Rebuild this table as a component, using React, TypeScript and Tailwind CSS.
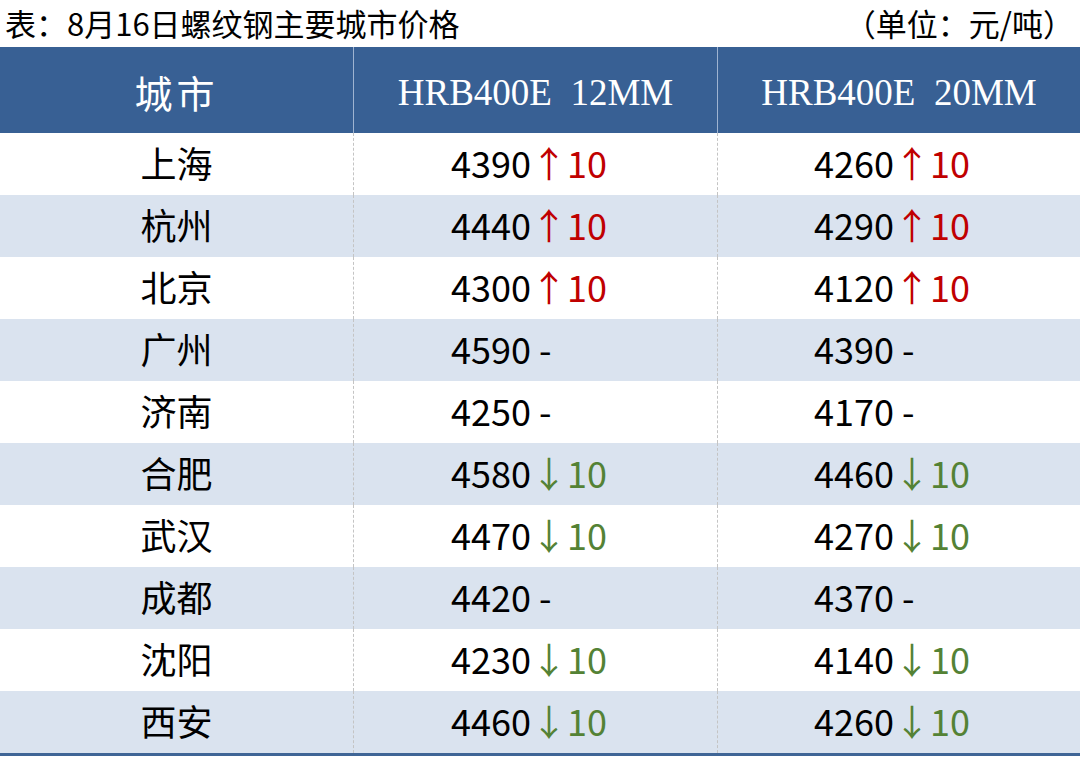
import React from 'react'

type Change = { dir: 'up' | 'down' | 'flat'; amount?: number }

interface Row {
  city: string
  p12: number
  c12: Change
  p20: number
  c20: Change
}

const up: Change = { dir: 'up', amount: 10 }
const down: Change = { dir: 'down', amount: 10 }
const flat: Change = { dir: 'flat' }

const rows: Row[] = [
  { city: '上海', p12: 4390, c12: up, p20: 4260, c20: up },
  { city: '杭州', p12: 4440, c12: up, p20: 4290, c20: up },
  { city: '北京', p12: 4300, c12: up, p20: 4120, c20: up },
  { city: '广州', p12: 4590, c12: flat, p20: 4390, c20: flat },
  { city: '济南', p12: 4250, c12: flat, p20: 4170, c20: flat },
  { city: '合肥', p12: 4580, c12: down, p20: 4460, c20: down },
  { city: '武汉', p12: 4470, c12: down, p20: 4270, c20: down },
  { city: '成都', p12: 4420, c12: flat, p20: 4370, c20: flat },
  { city: '沈阳', p12: 4230, c12: down, p20: 4140, c20: down },
  { city: '西安', p12: 4460, c12: down, p20: 4260, c20: down },
]

const sans = { fontFamily: '"Noto Sans CJK SC", "Noto Sans", sans-serif' }
const serif = { fontFamily: '"Liberation Serif", "Noto Sans CJK SC", serif' }

function Price({ value, change }: { value: number; change: Change }) {
  return (
    <span className="whitespace-pre">
      <span className="text-black">{value}</span>
      {change.dir === 'up' && <span className="text-[#c00000]">↑{change.amount}</span>}
      {change.dir === 'down' && <span className="text-[#548235]">↓{change.amount}</span>}
      {change.dir === 'flat' && <span className="text-black"> -</span>}
    </span>
  )
}

export default function App() {
  return (
    <div className="w-[1080px] h-[763px] bg-white overflow-hidden" style={sans}>
      <div className="h-[47px] flex items-center justify-between pl-[5px] pr-[6px] pb-[2px] text-[31px] text-black leading-none">
        <span>表：8月16日螺纹钢主要城市价格</span>
        <span>（单位：元/吨）</span>
      </div>

      <div className="grid grid-cols-[353px_364px_363px] h-[86px] bg-[#386094] text-white">
        <div className="flex items-center justify-center pt-[2px] text-[38px] tracking-[4px]">城市</div>
        <div className="flex items-center justify-center pt-[6px] text-[37px] border-l border-[#9fb4d1] whitespace-pre" style={serif}>
          HRB400E  12MM
        </div>
        <div className="flex items-center justify-center pt-[6px] text-[37px] border-l border-[#9fb4d1] whitespace-pre" style={serif}>
          HRB400E  20MM
        </div>
      </div>

      <div className="border-b-[3px] border-[#3f6596]">
        {rows.map((r, i) => (
          <div
            key={r.city}
            className={`grid grid-cols-[353px_364px_363px] h-[62px] text-[36px] leading-none ${i % 2 === 1 ? 'bg-[#dae3ef]' : 'bg-white'}`}
          >
            <div className="flex items-center justify-center pb-[5px] text-black">{r.city}</div>
            <div className="flex items-center pl-[97px] pb-[5px] border-l border-dashed border-[#c4c4c4]">
              <Price value={r.p12} change={r.c12} />
            </div>
            <div className="flex items-center pl-[96px] pb-[5px] border-l border-dashed border-[#c4c4c4]">
              <Price value={r.p20} change={r.c20} />
            </div>
          </div>
        ))}
      </div>
    </div>
  )
}
